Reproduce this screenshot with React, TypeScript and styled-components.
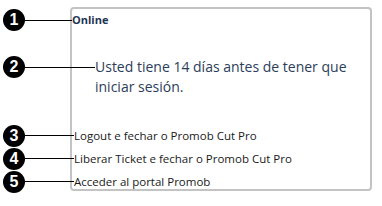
import React from "react";
import styled, { createGlobalStyle } from "styled-components";

const GlobalStyle = createGlobalStyle`
  html, body {
    margin: 0;
    padding: 0;
    background: #ffffff;
  }
  body {
    font-family: "Segoe UI", "Open Sans", "Noto Sans", sans-serif;
  }
`;

const Page = styled.div`
  width: 382px;
  height: 206px;
  padding: 7px 0 0 70px;
  box-sizing: border-box;
  overflow: hidden;
`;

const Panel = styled.div`
  width: 302px;
  height: 184px;
  box-sizing: border-box;
  border: 2px solid #c3c3c3;
  border-radius: 4px;
  padding: 4px 0 0 0;
  display: flex;
  flex-direction: column;
`;

const Row = styled.div<{ $indent: number; $top?: number }>`
  position: relative;
  margin-left: ${(p) => p.$indent}px;
  margin-top: ${(p) => p.$top ?? 0}px;
`;

const Callout = styled.div<{ $reach: number; $y: number }>`
  position: absolute;
  right: 100%;
  top: ${(p) => p.$y}px;
  width: ${(p) => p.$reach}px;
  height: 22px;
  margin-top: -11px;
  display: flex;
  align-items: center;
`;

const Marker = styled.span`
  flex: none;
  width: 22px;
  height: 22px;
  border-radius: 50%;
  background: #000000;
  color: #ffffff;
  font-family: "Liberation Sans", Arial, sans-serif;
  font-weight: bold;
  font-size: 16px;
  line-height: 22px;
  text-align: center;
`;

const Leader = styled.span`
  flex: 1;
  height: 1px;
  background: #000000;
`;

const Status = styled.div`
  font-size: 11px;
  font-weight: bold;
  line-height: 14px;
  color: #1f3554;
`;

const Message = styled.div`
  font-size: 14px;
  line-height: 20px;
  color: #2b3d5a;
`;

const Action = styled.div`
  font-size: 11.5px;
  line-height: 23px;
  color: #1a1a1a;
  white-space: nowrap;
`;

const Actions = styled.div`
  margin-top: 27px;
`;

function Note({ n, reach, y }: { n: number; reach: number; y: number }) {
  return (
    <Callout $reach={reach} $y={y}>
      <Marker>{n}</Marker>
      <Leader />
    </Callout>
  );
}

const actions = [
  "Logout e fechar o Promob Cut Pro",
  "Liberar Ticket e fechar o Promob Cut Pro",
  "Acceder al portal Promob",
];

export default function App() {
  return (
    <>
      <GlobalStyle />
      <Page>
        <Panel>
          <Row $indent={0}>
            <Note n={1} reach={69} y={7} />
            <Status>Online</Status>
          </Row>
          <Row $indent={23} $top={30}>
            <Note n={2} reach={92} y={10} />
            <Message>
              Usted tiene 14 días antes de tener que
              <br />
              iniciar sesión.
            </Message>
          </Row>
          <Actions>
            {actions.map((label, i) => (
              <Row $indent={2} key={label}>
                <Note n={i + 3} reach={71} y={11.5} />
                <Action>{label}</Action>
              </Row>
            ))}
          </Actions>
        </Panel>
      </Page>
    </>
  );
}
